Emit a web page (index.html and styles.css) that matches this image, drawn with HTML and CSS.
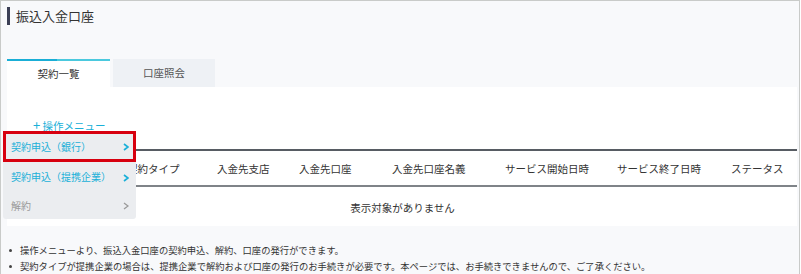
FILE: index.html
```html
<!DOCTYPE html>
<html lang="ja">
<head>
    <meta charset="UTF-8">
    <title>振込入金口座</title>
    <link rel="stylesheet" href="styles.css">
</head>
<body>
<div class="frame">
    <h1 class="page-title">振込入金口座</h1>

    <div class="tabs">
        <div class="tab active">契約一覧</div>
        <div class="tab">口座照会</div>
    </div>

    <div class="panel">
        <div class="op-menu">
            <span class="op-toggle"><span class="plus">+</span> 操作メニュー</span>
            <ul class="dropdown">
                <li class="item selected">契約申込（銀行）<svg class="chev" width="6" height="8" viewBox="0 0 6 8"><polyline points="1,1 5,4 1,7" /></svg></li>
                <li class="item">契約申込（提携企業）<svg class="chev" width="6" height="8" viewBox="0 0 6 8"><polyline points="1,1 5,4 1,7" /></svg></li>
                <li class="item disabled">解約<svg class="chev" width="6" height="8" viewBox="0 0 6 8"><polyline points="1,1 5,4 1,7" /></svg></li>
            </ul>
        </div>

        <table class="list">
            <thead>
                <tr>
                    <th class="c0"></th>
                    <th class="c1">契約タイプ</th>
                    <th class="c2">入金先支店</th>
                    <th class="c3">入金先口座</th>
                    <th class="c4">入金先口座名義</th>
                    <th class="c5">サービス開始日時</th>
                    <th class="c6">サービス終了日時</th>
                    <th class="c7">ステータス</th>
                </tr>
            </thead>
            <tbody>
                <tr>
                    <td class="empty" colspan="8">表示対象がありません</td>
                </tr>
            </tbody>
        </table>
    </div>

    <ul class="notes">
        <li>操作メニューより、振込入金口座の契約申込、解約、口座の発行ができます。</li>
        <li>契約タイプが提携企業の場合は、提携企業で解約および口座の発行のお手続きが必要です。本ページでは、お手続きできませんので、ご了承ください。</li>
    </ul>
</div>
</body>
</html>
```

FILE: styles.css
```css
html, body {
    margin: 0;
    padding: 0;
    background: #ffffff;
    overflow: hidden;
}

body {
    font-family: "Noto Sans CJK JP", "Noto Sans", sans-serif;
    color: #333;
}

.frame {
    width: 798px;
    height: 267px;
    border: 1px solid #c9cbc9;
    border-bottom: none;
    background: #f8f9fb;
    padding-top: 6px;
    overflow: hidden;
}

.page-title {
    margin: 0 0 0 6px;
    height: 18px;
    line-height: 18px;
    border-left: 3px solid #3b3f55;
    padding-left: 6px;
    font-size: 13px;
    font-weight: normal;
    color: #333;
}

/* Tabs */
.tabs {
    display: flex;
    gap: 3px;
    margin: 34px 0 0 6px;
}

.tab {
    width: 102px;
    height: 28px;
    line-height: 28px;
    text-align: center;
    font-size: 10.5px;
    color: #555;
    background: #eef1f5;
}

.tab.active {
    width: 103px;
    height: 26px;
    line-height: 26px;
    background: #fff;
    color: #333;
    border-top: 2px solid #1ab0d8;
    border-image: linear-gradient(to right, #1aaed6 0, #1aaed6 49%, #4bc9de 49%, #4bc9de 100%) 1;
    border-bottom: none;
}

/* Panel */
.panel {
    position: relative;
    margin-left: 6px;
    width: 790px;
    height: 139px;
    background: #fff;
}

.op-menu {
    height: 62px;
    position: relative;
}

.op-toggle {
    position: absolute;
    left: 26px;
    top: 30px;
    font-size: 10.5px;
    color: #1ab0d8;
    line-height: 16px;
}

.plus {
    font-size: 13px;
}

.dropdown {
    position: absolute;
    left: -4px;
    top: 44px;
    width: 133px;
    margin: 0;
    padding: 0;
    list-style: none;
    background: #ebedf0;
    border-radius: 0 0 3px 3px;
    z-index: 10;
}

.item {
    position: relative;
    height: 30px;
    line-height: 30px;
    padding-left: 8px;
    font-size: 10px;
    color: #1ab0d8;
}

.item.selected {
    height: 25px;
    line-height: 25px;
    border: 3px solid #d7000f;
    padding-left: 5px;
}

.item.disabled {
    height: 27px;
    line-height: 27px;
    color: #999;
}

.chev {
    position: absolute;
    right: 7px;
    top: 12px;
    fill: none;
    stroke: currentColor;
    stroke-width: 1.7;
}

.item.selected .chev {
    right: 4px;
    top: 9px;
}

.item.disabled .chev {
    top: 10px;
    stroke-width: 1.3;
}

/* Table */
.list {
    width: 777px;
    margin-left: 13px;
    border-collapse: collapse;
    font-size: 10.5px;
}

.list thead tr {
    height: 36px;
    border-top: 2px solid #575c63;
    border-bottom: 2px solid #7f8388;
}

.list th {
    font-weight: normal;
    text-align: left;
    padding: 0;
    color: #333;
}

.c0 { width: 107px; }
.c1 { width: 90px; }
.c2 { width: 82px; }
.c3 { width: 93px; }
.c4 { width: 113px; }
.c5 { width: 112px; }
.c6 { width: 114px; }

.list td.empty {
    text-align: center;
    height: 40px;
    padding: 0 12px 0 0;
}

/* Notes */
.notes {
    margin: 16px 0 0 0;
    padding: 0 0 0 19px;
    list-style: none;
    font-size: 9.3px;
    line-height: 16px;
    color: #333;
}

.notes li {
    position: relative;
}

.notes li::before {
    content: "";
    position: absolute;
    left: -11px;
    top: 7px;
    width: 3px;
    height: 3px;
    border-radius: 50%;
    background: #444;
}
```
